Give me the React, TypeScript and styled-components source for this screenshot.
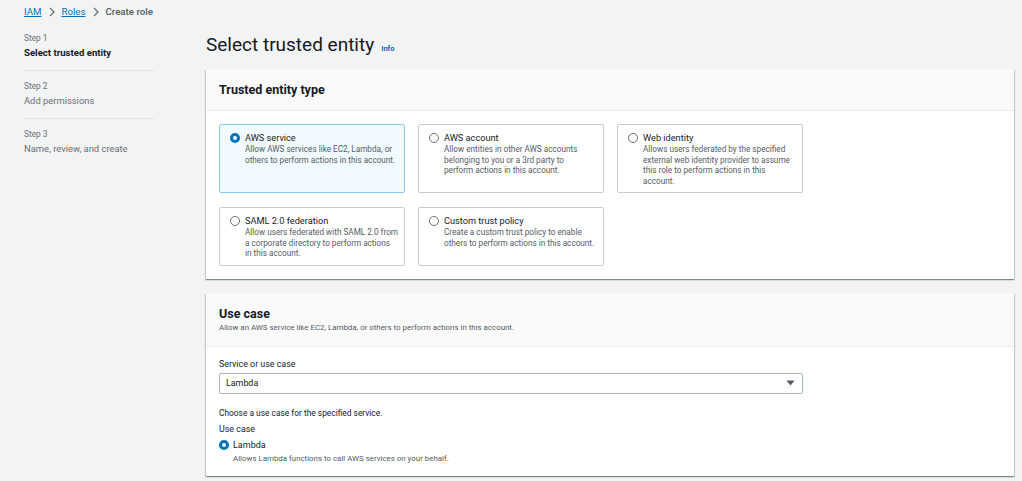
import React from "react";
import styled, { createGlobalStyle } from "styled-components";

const Global = createGlobalStyle`
  html, body { margin: 0; padding: 0; background: #f2f3f3; }
  body { font-family: Roboto, "Noto Sans", Arial, sans-serif; color: #16191f; -webkit-font-smoothing: antialiased; }
  * { box-sizing: border-box; }
`;

const Page = styled.div`
  width: 1022px;
  height: 481px;
  overflow: hidden;
  padding-left: 24px;
`;

const Crumbs = styled.nav`
  height: 23px;
  display: flex;
  align-items: center;
  gap: 6px;
  font-size: 9.7px;
`;

const CrumbLink = styled.a`
  color: #0073bb;
  text-decoration: underline;
`;

const CrumbCurrent = styled.span`
  color: #545b64;
  font-weight: 500;
`;

const Layout = styled.div`
  display: grid;
  grid-template-columns: 130px 808px;
  column-gap: 52px;
  align-items: start;
`;

const Steps = styled.ol`
  list-style: none;
  margin: 0;
  padding: 0;
`;

const Step = styled.li<{ $last?: boolean }>`
  padding: 9px 0 9px;
  border-bottom: ${(p) => (p.$last ? "none" : "1px solid #e1e4e6")};
`;

const StepNum = styled.div`
  font-size: 8.3px;
  line-height: 12px;
  color: #687078;
`;

const StepTitle = styled.div<{ $active?: boolean }>`
  font-size: ${(p) => (p.$active ? "9.6px" : "9.4px")};
  line-height: 17px;
  font-weight: ${(p) => (p.$active ? 700 : 400)};
  color: ${(p) => (p.$active ? "#16191f" : "#687078")};
`;

const Main = styled.main`
  padding-top: 10px;
`;

const TitleRow = styled.div`
  display: flex;
  align-items: baseline;
  gap: 7px;
  height: 24px;
  margin-bottom: 12px;
`;

const H1 = styled.h1`
  margin: 0;
  font-size: 19px;
  line-height: 24px;
  font-weight: 400;
  color: #16191f;
`;

const Info = styled.a`
  font-size: 7.5px;
  font-weight: 700;
  color: #0073bb;
`;

const Panel = styled.section`
  background: #fff;
  box-shadow: 0 1px 1px 0 rgba(0, 28, 36, 0.3), 1px 1px 1px 0 rgba(0, 28, 36, 0.15),
    -1px 1px 1px 0 rgba(0, 28, 36, 0.15);
  margin-bottom: 14px;
`;

const PanelHead = styled.header<{ $tall?: boolean }>`
  background: #fafafa;
  border-bottom: 1px solid #eaeded;
  padding: ${(p) => (p.$tall ? "13px 13px 12px" : "0 13px")};
  height: ${(p) => (p.$tall ? "54px" : "42px")};
  display: flex;
  flex-direction: column;
  justify-content: center;
`;

const H2 = styled.h2`
  margin: 0;
  font-size: 12.5px;
  line-height: 16px;
  font-weight: 700;
  color: #16191f;
`;

const HeadDesc = styled.p`
  margin: 0;
  font-size: 7.9px;
  line-height: 12px;
  color: #545b64;
`;

const PanelBody = styled.div<{ $form?: boolean }>`
  padding: ${(p) => (p.$form ? "11px 13px 12px" : "13px")};
`;

const Tiles = styled.div`
  display: grid;
  grid-template-columns: repeat(3, 186px);
  column-gap: 13px;
  row-gap: 14px;
`;

const Tile = styled.label<{ $selected?: boolean }>`
  display: flex;
  gap: 5px;
  padding: 6px 6px 6px 10px;
  border: 1px solid ${(p) => (p.$selected ? "#8cc8ea" : "#c6cbcd")};
  background: ${(p) => (p.$selected ? "#f1faff" : "#fff")};
  border-radius: 2px;
`;

const Radio = styled.span<{ $checked?: boolean }>`
  flex: none;
  width: 10px;
  height: 10px;
  margin-top: 1.5px;
  border-radius: 50%;
  border: ${(p) => (p.$checked ? "3px solid #0073bb" : "1px solid #687078")};
  background: #fff;
`;

const TileText = styled.div`
  flex: 1;
  min-width: 0;
  display: flex;
  flex-direction: column;
`;

const TileLabel = styled.span`
  font-size: 9.2px;
  line-height: 13px;
  color: #16191f;
`;

const TileDesc = styled.span`
  font-size: 8.2px;
  line-height: 10.5px;
  color: #545b64;
`;

const DescLine = styled.span`
  display: block;
  white-space: nowrap;
`;

const FieldLabel = styled.div<{ $gap?: number }>`
  margin-top: ${(p) => p.$gap ?? 0}px;
  font-size: 8.9px;
  line-height: 12px;
  color: #16191f;
`;

const Select = styled.div`
  margin-top: 3px;
  width: 584px;
  height: 21px;
  border: 1px solid #aab7b8;
  border-radius: 2px;
  display: flex;
  align-items: center;
  justify-content: space-between;
  padding: 0 7px 0 6px;
  font-size: 8.9px;
  color: #16191f;
`;

const Hint = styled.div`
  margin-top: 13px;
  font-size: 8.4px;
  line-height: 12px;
  color: #16191f;
`;

const Choice = styled.label`
  margin-top: 4px;
  display: flex;
  gap: 4px;
`;

const ChoiceLabel = styled.span`
  font-size: 9px;
  line-height: 13px;
  color: #16191f;
`;

const ChoiceDesc = styled.span`
  margin-top: 1px;
  font-size: 7.9px;
  line-height: 11px;
  color: #545b64;
`;

const Chevron = () => (
  <svg width="8" height="10" viewBox="0 0 8 10" fill="none">
    <path d="M2 1l4 4-4 4" stroke="#687078" strokeWidth="1.3" />
  </svg>
);

const Caret = () => (
  <svg width="9" height="6" viewBox="0 0 9 6">
    <path d="M0.5 0.5h8L4.5 5.5z" fill="#545b64" />
  </svg>
);

const tiles = [
  {
    t: "AWS service",
    d: ["Allow AWS services like EC2, Lambda, or", "others to perform actions in this account."],
    s: true,
  },
  {
    t: "AWS account",
    d: ["Allow entities in other AWS accounts", "belonging to you or a 3rd party to", "perform actions in this account."],
  },
  {
    t: "Web identity",
    d: [
      "Allows users federated by the specified",
      "external web identity provider to assume",
      "this role to perform actions in this",
      "account.",
    ],
  },
  {
    t: "SAML 2.0 federation",
    d: ["Allow users federated with SAML 2.0 from", "a corporate directory to perform actions", "in this account."],
  },
  {
    t: "Custom trust policy",
    d: ["Create a custom trust policy to enable", "others to perform actions in this account."],
  },
];

export default function App() {
  return (
    <Page>
      <Global />
      <Crumbs>
        <CrumbLink>IAM</CrumbLink>
        <Chevron />
        <CrumbLink>Roles</CrumbLink>
        <Chevron />
        <CrumbCurrent>Create role</CrumbCurrent>
      </Crumbs>
      <Layout>
        <Steps>
          <Step>
            <StepNum>Step 1</StepNum>
            <StepTitle $active>Select trusted entity</StepTitle>
          </Step>
          <Step>
            <StepNum>Step 2</StepNum>
            <StepTitle>Add permissions</StepTitle>
          </Step>
          <Step $last>
            <StepNum>Step 3</StepNum>
            <StepTitle>Name, review, and create</StepTitle>
          </Step>
        </Steps>
        <Main>
          <TitleRow>
            <H1>Select trusted entity</H1>
            <Info>Info</Info>
          </TitleRow>
          <Panel>
            <PanelHead>
              <H2>Trusted entity type</H2>
            </PanelHead>
            <PanelBody>
              <Tiles>
                {tiles.map((x) => (
                  <Tile key={x.t} $selected={x.s}>
                    <Radio $checked={x.s} />
                    <TileText>
                      <TileLabel>{x.t}</TileLabel>
                      <TileDesc>
                        {x.d.map((line) => (
                          <DescLine key={line}>{line}</DescLine>
                        ))}
                      </TileDesc>
                    </TileText>
                  </Tile>
                ))}
              </Tiles>
            </PanelBody>
          </Panel>
          <Panel>
            <PanelHead $tall>
              <H2>Use case</H2>
              <HeadDesc>Allow an AWS service like EC2, Lambda, or others to perform actions in this account.</HeadDesc>
            </PanelHead>
            <PanelBody $form>
              <FieldLabel>Service or use case</FieldLabel>
              <Select>
                <span>Lambda</span>
                <Caret />
              </Select>
              <Hint>Choose a use case for the specified service.</Hint>
              <FieldLabel $gap={4}>Use case</FieldLabel>
              <Choice>
                <Radio $checked />
                <TileText>
                  <ChoiceLabel>Lambda</ChoiceLabel>
                  <ChoiceDesc>Allows Lambda functions to call AWS services on your behalf.</ChoiceDesc>
                </TileText>
              </Choice>
            </PanelBody>
          </Panel>
        </Main>
      </Layout>
    </Page>
  );
}
